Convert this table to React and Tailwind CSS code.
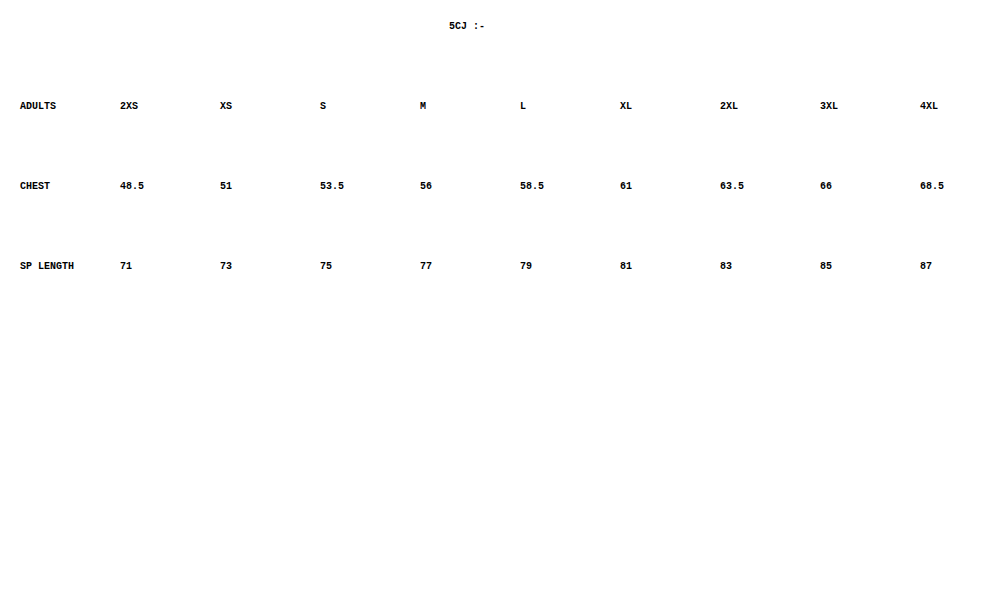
import React from 'react'

const sizes = ['2XS', 'XS', 'S', 'M', 'L', 'XL', '2XL', '3XL', '4XL']

const rows = [
  { label: 'ADULTS', values: sizes },
  { label: 'CHEST', values: ['48.5', '51', '53.5', '56', '58.5', '61', '63.5', '66', '68.5'] },
  { label: 'SP LENGTH', values: ['71', '73', '75', '77', '79', '81', '83', '85', '87'] },
]

const App = () => {
  return (
    <div className="w-[1000px] h-[600px] bg-white text-black font-['Liberation_Mono',monospace] font-bold text-[10px] leading-[12px]">
      <div className="pt-[21px] w-[934px] text-center whitespace-pre">5CJ :-</div>

      <div className="mt-[68px] pl-[20px] flex flex-col gap-y-[68px]">
        {rows.map((row) => (
          <div key={row.label} className="grid grid-cols-[repeat(10,100px)]">
            <span className="whitespace-pre">{row.label}</span>
            {row.values.map((v, i) => (
              <span key={i}>{v}</span>
            ))}
          </div>
        ))}
      </div>
    </div>
  )
}

export default App
